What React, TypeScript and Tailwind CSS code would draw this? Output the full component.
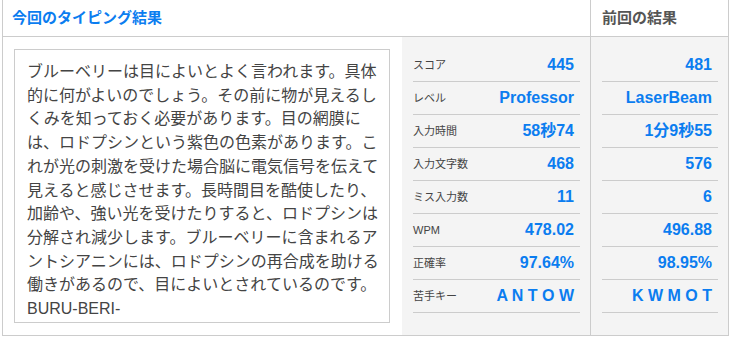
import React from 'react';

const FONT = { fontFamily: '"Liberation Sans", "Noto Sans CJK JP", sans-serif' };

const PASSAGE =
  'ブルーベリーは目によいとよく言われます。具体的に何がよいのでしょう。その前に物が見えるしくみを知っておく必要があります。目の網膜には、ロドプシンという紫色の色素があります。これが光の刺激を受けた場合脳に電気信号を伝えて見えると感じさせます。長時間目を酷使したり、加齢や、強い光を受けたりすると、ロドプシンは分解され減少します。ブルーベリーに含まれるアントシアニンには、ロドプシンの再合成を助ける働きがあるので、目によいとされているのです。';

const ROWS: { label: string; now: string; prev: string }[] = [
  { label: 'スコア', now: '445', prev: '481' },
  { label: 'レベル', now: 'Professor', prev: 'LaserBeam' },
  { label: '入力時間', now: '58秒74', prev: '1分9秒55' },
  { label: '入力文字数', now: '468', prev: '576' },
  { label: 'ミス入力数', now: '11', prev: '6' },
  { label: 'WPM', now: '478.02', prev: '496.88' },
  { label: '正確率', now: '97.64%', prev: '98.95%' },
  { label: '苦手キー', now: 'A N T O W', prev: 'K W M O T' },
];

const StatRow: React.FC<{ label?: string; value: string }> = ({ label, value }) => (
  <div className="flex h-[33px] items-center justify-between border-b border-[#cccccc]">
    <span className="text-[11px] text-[#444444]">{label}</span>
    <span className="pr-[6px] text-[16px] font-bold text-[#0b7df0] whitespace-pre">{value}</span>
  </div>
);

export default function App() {
  return (
    <div className="h-[340px] w-[729px] bg-white" style={FONT}>
      <div className="ml-[2px] w-[727px] border-x border-b border-[#cccccc]">
        <div className="flex h-[37px] border-b border-[#cccccc]">
          <div className="flex w-[587px] items-center pl-[9px] text-[15px] font-bold text-[#0b7df0]">
            今回のタイピング結果
          </div>
          <div className="flex flex-1 items-center border-l border-[#cccccc] pl-[11px] text-[15px] font-bold text-[#555555]">
            前回の結果
          </div>
        </div>
        <div className="flex">
          <div className="w-[399px] pl-[11px] py-[12px]">
            <div className="h-[274px] w-[376px] overflow-hidden border border-[#cccccc] pl-3 pr-2 pt-[10px] text-[16px] leading-[23.7px] text-[#444444]">
              <p>{PASSAGE}</p>
              <p>BURU-BERI-</p>
            </div>
          </div>
          <div className="w-[188px] bg-[#f4f4f4] pl-[11px] pr-[10px] pt-[12px] pb-[22px]">
            {ROWS.map((r) => (
              <StatRow key={r.label} label={r.label} value={r.now} />
            ))}
          </div>
          <div className="flex-1 border-l border-[#cccccc] bg-[#f4f4f4] pl-[11px] pr-[10px] pt-[12px] pb-[22px]">
            {ROWS.map((r) => (
              <StatRow key={r.label} value={r.prev} />
            ))}
          </div>
        </div>
      </div>
    </div>
  );
}
